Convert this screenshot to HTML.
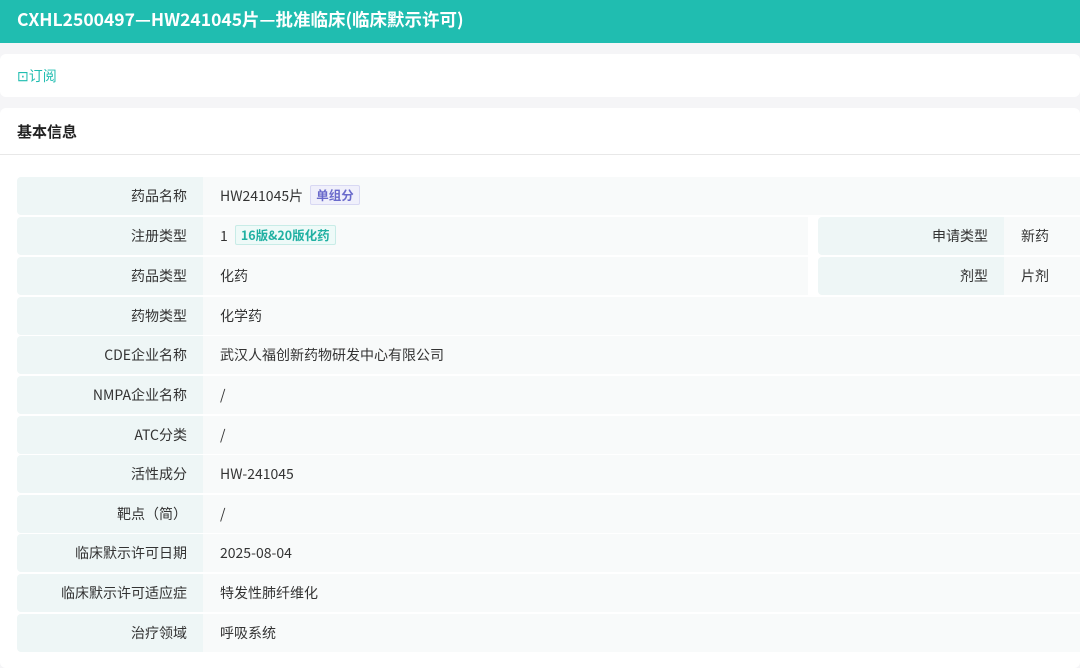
<!DOCTYPE html>
<html><head><meta charset="utf-8"><style>
*{margin:0;padding:0;box-sizing:border-box}
body{width:1080px;height:652px;overflow:hidden;background:#f5f5f7;font-family:"Noto Sans CJK SC","Liberation Sans",sans-serif;font-size:14px;color:#333}
.hd{height:43px;background:#20bdb0;color:#fff;font-weight:bold;font-size:17.5px;line-height:40px;padding-left:17px}
.sub{position:absolute;top:54px;left:0;width:1080px;height:43px;background:#fff;border-radius:6px;color:#20bdb0;font-size:14px;line-height:44px;padding-left:17px}
.card{position:absolute;top:108px;left:0;width:1080px;height:560px;background:#fff;border-radius:6px}
.ct{height:47px;line-height:48px;padding-left:17px;font-weight:bold;font-size:15px;color:#222;border-bottom:1px solid #e8e8e8}
.row{position:absolute;left:17px;height:38px;display:flex;line-height:38px}
.l{width:186px;background:#eef6f6;text-align:right;padding-right:16px;border-radius:4px 0 0 4px}
.v{background:#f8fafa;padding-left:17px;flex:1}
.tag{display:inline-block;font-size:12.5px;line-height:18px;padding:0 5px;border-radius:2px;margin-left:4px;font-weight:bold;vertical-align:1px}
.t1{background:#f0f0fb;border:1px solid #d8d8f3;color:#6a6acb}
.t2{background:#eefaf8;border:1px solid #c8ece7;color:#20b0a2}
</style></head><body>
<div class="hd">CXHL2500497—HW241045片—批准临床(临床默示许可)</div>
<div class="sub">⊡订阅</div>
<div class="card"><div class="ct">基本信息</div></div>
<div class="row" style="top:177px;width:1063px"><div class="l">药品名称</div><div class="v">HW241045片 <span class="tag t1">单组分</span></div></div>
<div class="row" style="top:217px;width:791px"><div class="l">注册类型</div><div class="v">1 <span class="tag t2">16版&amp;20版化药</span></div></div>
<div class="row" style="top:257px;width:791px"><div class="l">药品类型</div><div class="v">化药</div></div>
<div class="row" style="top:217px;left:818px;width:262px"><div class="l">申请类型</div><div class="v">新药</div></div>
<div class="row" style="top:257px;left:818px;width:262px"><div class="l">剂型</div><div class="v">片剂</div></div>
<div class="row" style="top:297px;width:1063px"><div class="l">药物类型</div><div class="v">化学药</div></div>
<div class="row" style="top:336px;width:1063px"><div class="l">CDE企业名称</div><div class="v">武汉人福创新药物研发中心有限公司</div></div>
<div class="row" style="top:376px;width:1063px"><div class="l">NMPA企业名称</div><div class="v">/</div></div>
<div class="row" style="top:416px;width:1063px"><div class="l">ATC分类</div><div class="v">/</div></div>
<div class="row" style="top:455px;width:1063px"><div class="l">活性成分</div><div class="v">HW-241045</div></div>
<div class="row" style="top:495px;width:1063px"><div class="l">靶点（简）</div><div class="v">/</div></div>
<div class="row" style="top:534px;width:1063px"><div class="l">临床默示许可日期</div><div class="v">2025-08-04</div></div>
<div class="row" style="top:574px;width:1063px"><div class="l">临床默示许可适应症</div><div class="v">特发性肺纤维化</div></div>
<div class="row" style="top:614px;width:1063px"><div class="l">治疗领域</div><div class="v">呼吸系统</div></div>
</body></html>
